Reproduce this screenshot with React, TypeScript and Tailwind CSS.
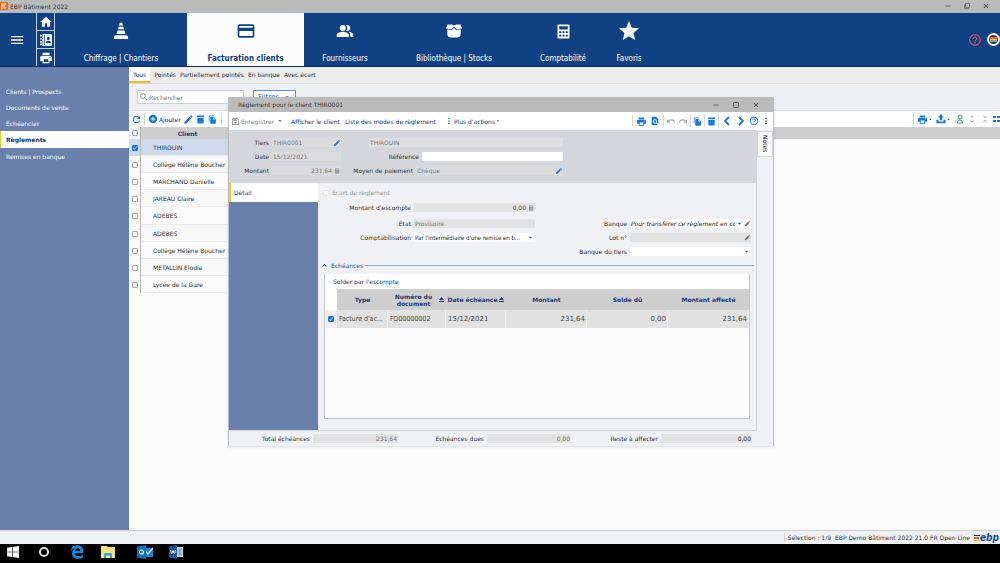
import type { ReactNode } from "react";
import clsx from "clsx";
import {
  MdAddCircle,
  MdArrowDropDown,
  MdCheck,
  MdClose,
  MdCreditCard,
  MdCropSquare,
  MdEdit,
  MdFileCopy,
  MdFilterNone,
  MdFindInPage,
  MdHelpOutline,
  MdHome,
  MdKeyboardArrowUp,
  MdMenu,
  MdMoreVert,
  MdOutlineSave,
  MdPeopleAlt,
  MdPrint,
  MdRedo,
  MdRefresh,
  MdRemove,
  MdSearch,
  MdStar,
  MdUndo,
  MdUnfoldLess,
  MdUnfoldMore,
} from "react-icons/md";

const clients = [
  "THIROUIN",
  "Collège Hélène Boucher",
  "MARCHAND Danielle",
  "JAREAU Claire",
  "ADEBES",
  "ADEBES",
  "Collège Hélène Boucher",
  "METALLIN Elodie",
  "Lycée de la Gare",
];

const sideLinks = ["Clients | Prospects", "Documents de vente", "Échéancier", "Règlements", "Remises en banque"];

const views = ["Tous", "Pointés", "Partiellement pointés", "En banque", "Avec écart"];

function Cone() {
  return (
    <svg viewBox="0 0 24 24" className="h-5 w-5" fill="currentColor">
      <path d="M10.500 2h3l.9 3.500H9.600zM9.200 7h5.600l.9 3H8.300zM7.800 11.500h8.400l1 4H6.800zM3.500 20.500c0-2 .8-3.500 2.300-3.500h12.400c1.500 0 2.300 1.500 2.300 3.500v1h-17z" />
    </svg>
  );
}

function OpenBox() {
  return (
    <svg viewBox="0 0 16 14" className="h-[14px] w-4" fill="currentColor">
      <path d="M1.500.500h4L8 1.500l2.500-1h4L16 4.200l-5 1.300-2-1.700L8 2.800 7 3.800 5 5.500 0 4.200z" />
      <path d="M1.300 5.200l4.200 1L8 4l2.500 2.200 4.200-1V10c0 2.700-1.700 3.500-4 3.500H5.300c-2.300 0-4-.8-4-3.500z" />
    </svg>
  );
}

function AddressBook() {
  return (
    <svg viewBox="0 0 12 12" className="h-3 w-3" fill="currentColor" fillRule="evenodd">
      <path d="M0 1h2v1.500H0zM0 4h2v1.500H0zM0 7h2v1.500H0zM0 9.500h2V11H0z" />
      <path d="M2.500 0H11a1 1 0 011 1v10a1 1 0 01-1 1H2.500zM4 1v10h.8V1zM8.300 3a1.500 1.500 0 100 3 1.500 1.500 0 000-3zM5.700 9h5.200c0-1.500-1.200-2.200-2.600-2.200S5.700 7.500 5.700 9z" />
    </svg>
  );
}

function Calculator({ className }: { className?: string }) {
  return (
    <svg viewBox="0 0 24 24" className={className} fill="currentColor" fillRule="evenodd">
      <path d="M5 2h14a1.500 1.500 0 011.500 1.500v17A1.500 1.500 0 0119 22H5a1.500 1.500 0 01-1.500-1.500v-17A1.500 1.500 0 015 2zM6 4.500V9h12V4.500zM6 11.500V14h3v-2.500zM10.500 11.500V14h3v-2.500zM15 11.500V14h3v-2.500zM6 16.500V19h3v-2.500zM10.500 16.500V19h3v-2.500zM15 16.500V19h3v-2.500z" />
    </svg>
  );
}

function Bin() {
  return (
    <svg viewBox="0 0 10 10" className="h-[9px] w-[9px]" fill="currentColor">
      <path d="M1 .5h8v2H1zM1.500 3.300h7v5.200a1 1 0 01-1 1h-5a1 1 0 01-1-1z" />
    </svg>
  );
}

function Upload() {
  return (
    <svg viewBox="0 0 24 24" className="h-[10px] w-[10px]" fill="currentColor">
      <path d="M12 0l7 8h-4v7H9V8H5zM1 14h5v4h12v-4h5v8H1z" />
    </svg>
  );
}

function Chevron({ left }: { left?: boolean }) {
  return (
    <svg viewBox="0 0 12 12" className="h-3 w-3" fill="none" stroke="currentColor" strokeWidth="1.800">
      <path d={left ? "M8 2L4 6l4 4" : "M4 2l4 4-4 4"} />
    </svg>
  );
}

function Contact() {
  return (
    <svg viewBox="0 0 10 10" className="h-[10px] w-[10px]" fill="none">
      <path d="M1 9c0-2 1-3 3-3" stroke="#b8c4c0" />
      <circle cx="6" cy="3" r="2" stroke="#3f9f7c" />
      <path d="M3.500 9c0-2 1-3 2.500-3s2.500 1 2.500 3z" stroke="#3f9f7c" />
    </svg>
  );
}

const modules = [
  { name: "Chiffrage | Chantiers", icon: <Cone />, width: "w-[132px]" },
  { name: "Facturation clients", icon: <MdCreditCard className="h-5 w-5" />, width: "w-[117px]", active: true },
  { name: "Fournisseurs", icon: <MdPeopleAlt className="h-[18px] w-[18px]" />, width: "w-[82px]" },
  { name: "Bibliothèque | Stocks", icon: <OpenBox />, width: "w-[136px]" },
  { name: "Comptabilité", icon: <Calculator className="h-[17px] w-[17px]" />, width: "w-[82px]" },
  { name: "Favoris", icon: <MdStar className="h-6 w-6" />, width: "w-[50px]" },
];

function Tick({ label, checked, disabled }: { label: string; checked?: boolean; disabled?: boolean }) {
  return (
    <span className="relative inline-flex h-[6px] w-[6px] shrink-0">
      <input
        type="checkbox"
        aria-label={label}
        defaultChecked={checked}
        disabled={disabled}
        className="peer h-[6px] w-[6px] appearance-none rounded-[1px] border border-[#aaa] bg-white checked:border-[#1878d8] checked:bg-[#1878d8] disabled:border-[#e4e4e6]"
      />
      <MdCheck className="pointer-events-none absolute inset-0 hidden h-[6px] w-[6px] text-white peer-checked:block" />
    </span>
  );
}

function IconButton({ label, className, children }: { label: string; className?: string; children?: ReactNode }) {
  return (
    <button type="button" aria-label={label} className={clsx("flex shrink-0 items-center justify-center", className)}>
      {children}
    </button>
  );
}

function Divider() {
  return <span className="h-3 w-px shrink-0 bg-[#d4d4d4]" />;
}

type FieldProps = {
  id: string;
  label: string;
  value?: string;
  labelWidth?: string;
  className?: string;
  inputClass?: string;
  children?: ReactNode;
};

function Field({ id, label, value = "", labelWidth, className, inputClass = "bg-[#e2e2e2] text-[#777]", children }: FieldProps) {
  return (
    <div className={clsx("flex h-[9px] items-center gap-[3px]", className)}>
      <label htmlFor={id} className={clsx("shrink-0 whitespace-nowrap text-right", labelWidth)}>
        {label}
      </label>
      <div className={clsx("flex h-[9px] min-w-0 flex-1 items-center", inputClass)}>
        <input id={id} defaultValue={value} className="h-[9px] min-w-0 flex-1 bg-transparent px-px text-inherit outline-none [text-align:inherit]" />
        {children}
      </div>
    </div>
  );
}

function SelectField({ id, label, value, labelWidth, className, selectClass, children }: FieldProps & { selectClass?: string }) {
  return (
    <div className={clsx("flex h-[9px] items-center gap-[3px]", className)}>
      <label htmlFor={id} className={clsx("shrink-0 whitespace-nowrap text-right", labelWidth)}>
        {label}
      </label>
      <div className="flex h-[9px] min-w-0 flex-1 items-center bg-white">
        <select id={id} className={clsx("h-[9px] min-w-0 flex-1 appearance-none overflow-hidden bg-transparent pl-px text-[#222] outline-none", selectClass)}>
          <option>{value}</option>
        </select>
        <MdArrowDropDown className="h-[9px] w-[9px] shrink-0 text-[#1878d8]" />
        {children}
      </div>
    </div>
  );
}

function WindowButtons({ restore, className }: { restore?: boolean; className?: string }) {
  return (
    <div className={clsx("flex items-center text-[#333]", className)}>
      <IconButton label="Réduire">
        <MdRemove className="h-2 w-2" />
      </IconButton>
      <IconButton label="Agrandir">
        {restore ? <MdFilterNone className="h-[6px] w-2" /> : <MdCropSquare className="h-2 w-2" />}
      </IconButton>
      <IconButton label="Fermer">
        <MdClose className="h-2 w-2" />
      </IconButton>
    </div>
  );
}

function TopNav() {
  return (
    <header className="flex h-[54px] shrink-0 overflow-hidden border-b border-[#0a2a5c] bg-[#104283] text-white">
      <IconButton label="Menu" className="w-[34px]">
        <MdMenu className="h-4 w-4" />
      </IconButton>
      <div className="ml-[2px] flex w-[19px] shrink-0 flex-col divide-y divide-[#c5d2e6] border-x border-[#c5d2e6]">
        <IconButton label="Accueil" className="flex-1">
          <MdHome className="h-[14px] w-[14px]" />
        </IconButton>
        <IconButton label="Contacts" className="flex-1">
          <AddressBook />
        </IconButton>
        <IconButton label="Imprimer" className="flex-1">
          <MdPrint className="h-[14px] w-[14px]" />
        </IconButton>
      </div>
      <nav className="flex min-w-0 flex-1 font-['DejaVu_Sans_Condensed',sans-serif]">
        {modules.map((m) => (
          <button
            key={m.name}
            type="button"
            className={clsx(
              "flex shrink-0 flex-col items-center justify-between whitespace-nowrap pt-[6px] pb-[2px] text-[8px]",
              m.width,
              m.active && "bg-[#fcfcfd] font-bold text-[#104283]"
            )}
          >
            <span className="flex h-6 items-center">{m.icon}</span>
            <span className="leading-[10px]">{m.name}</span>
          </button>
        ))}
      </nav>
      <div className="flex w-8 shrink-0 items-center gap-[5px]">
        <IconButton label="Aide" className="text-[#e0506c]">
          <MdHelpOutline className="h-[14px] w-[14px]" />
        </IconButton>
        <IconButton label="EBP" className="h-[13px] w-[13px] rounded-full border-2 border-white bg-[#2a3560]">
          <svg viewBox="0 0 9 9" className="h-[9px] w-[9px]">
            <path d="M1 2h7v2H1z" fill="#e66b2e" />
            <path d="M1 4h7v1H1z" fill="#e9c84a" />
            <path d="M1 5h7v2H1z" fill="#7fa0a4" />
          </svg>
        </IconButton>
      </div>
    </header>
  );
}

function Sidebar() {
  return (
    <aside className="w-[129px] shrink-0 bg-[#6880ab] pt-4">
      <ul>
        {sideLinks.map((name) => (
          <li key={name}>
            <a
              href="#"
              className={clsx(
                "flex items-center",
                name === "Règlements"
                  ? "h-[17px] border-l border-[#f2c230] bg-[#fcfcfd] pl-[5px] font-bold text-[#163a78]"
                  : "h-4 pl-[6px] text-white"
              )}
            >
              {name}
            </a>
          </li>
        ))}
      </ul>
    </aside>
  );
}

function ClientTable() {
  return (
    <table className="w-full table-fixed border-separate border-spacing-0 text-left">
      <colgroup>
        <col className="w-3" />
        <col className="w-[87px]" />
        <col />
      </colgroup>
      <thead>
        <tr className="h-3 bg-[#cfcfcf] text-[#163a78]">
          <th className="border-r border-[#b5b5b5] bg-[#f3f3f3] p-0">
            <div className="flex justify-center">
              <Tick label="Tout sélectionner" />
            </div>
          </th>
          <th className="p-0 pl-[6px] text-center">Client</th>
          <th className="p-0" />
        </tr>
      </thead>
      <tbody>
        {clients.map((name, i) => (
          <tr key={i} className={clsx(i === 4 ? "h-[18px]" : "h-[17px]", i === 0 && "text-[#163a78]")}>
            <td className={clsx("border-r border-[#b5b5b5] p-0", i === 0 && "bg-[#cfdbec]")}>
              <div className="flex justify-center">
                <Tick label={`Sélectionner ${name}`} checked={i === 0} />
              </div>
            </td>
            <td
              className={clsx(
                "whitespace-nowrap border-b border-[#ececec] p-0 pl-3",
                i === 0 ? "bg-[#cfdbec]" : i % 2 ? "bg-[#f8f8f8]" : "bg-[#fcfcfd]"
              )}
            >
              {name}
            </td>
            <td className="p-0" />
          </tr>
        ))}
      </tbody>
    </table>
  );
}

function ListPanel() {
  return (
    <main className="min-w-0 flex-1 bg-[#fcfcfd]">
      <div role="tablist" className="flex h-[17px] gap-[4px] border-b border-[#d8d8d8] bg-[#ececec]">
        {views.map((v, i) => (
          <button
            key={v}
            type="button"
            role="tab"
            aria-selected={i === 0}
            className={clsx("border-b-2", i === 0 ? "border-[#f2b820] bg-white px-1 text-[#104283]" : "border-transparent")}
          >
            {v}
          </button>
        ))}
      </div>
      <div className="flex h-[27px] gap-[9px] border-b border-[#e0e0e4] bg-[#eff0f4] pt-[6px] pl-2">
        <div className="flex h-[14px] w-[107px] items-center border border-[#d0d0d4] bg-white pl-px text-[#888]">
          <MdSearch className="h-[10px] w-[10px]" />
          <input aria-label="Rechercher" placeholder="Rechercher" className="min-w-0 flex-1 bg-transparent outline-none placeholder:text-[#777]" />
        </div>
        <button type="button" className="flex h-[14px] w-[43px] items-center justify-center gap-1 border border-[#5b8fd0] bg-white text-[7px] text-[#1878d8]">
          Filtres
          <MdArrowDropDown className="h-2 w-2" />
        </button>
      </div>
      <div className="flex h-4 items-center bg-white text-[#1878d8]">
        <IconButton label="Actualiser" className="w-[15px]">
          <MdRefresh className="h-[11px] w-[11px]" />
        </IconButton>
        <Divider />
        <button type="button" className="ml-[3px] flex items-center gap-px text-[#163a78]">
          <MdAddCircle className="h-[10px] w-[10px] text-[#1878d8]" />
          Ajouter
        </button>
        <IconButton label="Modifier" className="ml-[2px]">
          <MdEdit className="h-[11px] w-[11px]" />
        </IconButton>
        <IconButton label="Supprimer" className="ml-[2px]">
          <Bin />
        </IconButton>
        <IconButton label="Dupliquer" className="mr-1 ml-[3px]">
          <MdFileCopy className="h-[9px] w-[9px]" />
        </IconButton>
        <Divider />
        <div className="ml-auto flex items-center gap-[3px] text-[#aaa]">
          <Divider />
          <IconButton label="Imprimer la liste" className="text-[#1878d8]">
            <MdPrint className="h-[11px] w-[11px]" />
            <MdArrowDropDown className="h-[5px] w-[5px] text-[#333]" />
          </IconButton>
          <IconButton label="Exporter" className="text-[#1878d8]">
            <Upload />
            <MdArrowDropDown className="h-[5px] w-[5px] text-[#333]" />
          </IconButton>
          <IconButton label="Client">
            <Contact />
          </IconButton>
          <IconButton label="Déplier">
            <MdUnfoldMore className="h-[10px] w-[10px]" />
          </IconButton>
          <IconButton label="Replier">
            <MdUnfoldLess className="h-[10px] w-[10px]" />
          </IconButton>
          <IconButton label="Affichage" className="w-[7px] overflow-hidden text-[#1878d8]">
            <svg viewBox="0 0 7 6" className="h-[6px] w-[7px]" fill="currentColor">
              <path d="M0 0h3v2H0zM4 0h3v2H4zM0 4h3v2H0zM4 4h3v2H4z" />
            </svg>
          </IconButton>
        </div>
      </div>
      <ClientTable />
    </main>
  );
}

function DialogToolbar() {
  return (
    <div className="flex h-[18px] items-center whitespace-nowrap bg-white pl-[2px] text-[#163a78]">
      <button type="button" className="flex items-center gap-px text-[#888]">
        <MdOutlineSave className="h-[9px] w-[9px]" />
        Enregistrer
        <MdArrowDropDown className="ml-px h-2 w-2 text-[#555]" />
      </button>
      <button type="button" className="ml-[7px]">Afficher le client</button>
      <button type="button" className="ml-[5px]">Liste des modes de règlement</button>
      <button type="button" className="ml-2 flex items-center">
        <MdMoreVert className="h-[10px] w-[10px] text-[#1878d8]" />
        Plus d'actions
        <MdArrowDropDown className="h-[6px] w-[6px]" />
      </button>
      <div className="mr-[2px] ml-auto flex items-center gap-[2px] text-[#1878d8]">
        <Divider />
        <IconButton label="Imprimer" className="w-3">
          <MdPrint className="h-[11px] w-[11px]" />
        </IconButton>
        <IconButton label="Aperçu" className="w-3">
          <MdFindInPage className="h-[10px] w-[10px]" />
        </IconButton>
        <Divider />
        <IconButton label="Annuler" className="text-[#aaa]">
          <MdUndo className="h-[10px] w-[10px]" />
        </IconButton>
        <IconButton label="Rétablir" className="text-[#aaa]">
          <MdRedo className="h-[10px] w-[10px]" />
        </IconButton>
        <Divider />
        <IconButton label="Dupliquer">
          <MdFileCopy className="h-[9px] w-[9px]" />
        </IconButton>
        <Divider />
        <IconButton label="Supprimer">
          <Bin />
        </IconButton>
        <Divider />
        <IconButton label="Précédent">
          <Chevron left />
        </IconButton>
        <IconButton label="Suivant">
          <Chevron />
        </IconButton>
        <IconButton label="Aide">
          <MdHelpOutline className="h-[10px] w-[10px]" />
        </IconButton>
        <IconButton label="Plus" className="text-[#333]">
          <MdMoreVert className="h-[10px] w-[10px]" />
        </IconButton>
      </div>
    </div>
  );
}

function DialogHeader() {
  return (
    <div className="flex bg-[#eff1f5]">
      <div className="flex flex-1 gap-3 bg-[#d5d6db] pt-2 pb-2">
        <div className="flex flex-col gap-[5px]">
          <Field id="tiers" label="Tiers" value="THIR0001" labelWidth="w-10" className="w-[112px]" inputClass="bg-[#dcdcdf] text-[#777]">
            <MdEdit className="h-2 w-2 text-[#1878d8]" />
          </Field>
          <Field id="date" label="Date" value="15/12/2021" labelWidth="w-10" className="w-[112px]" inputClass="bg-[#dcdcdf] text-[#777]" />
          <Field id="montant" label="Montant" value="231,64" labelWidth="w-10" className="w-[112px]" inputClass="bg-[#dcdcdf] text-right text-[#777]">
            <Calculator className="mx-px h-[6px] w-[6px] text-[#888]" />
          </Field>
        </div>
        <div className="flex w-[210px] flex-col gap-[5px]">
          <div className="flex h-[9px] justify-end">
            <input aria-label="Nom du tiers" defaultValue="THIROUIN" className="h-[9px] w-[194px] bg-[#dfdfe1] px-px text-[#777] outline-none" />
          </div>
          <Field id="reference" label="Référence" labelWidth="w-[66px]" inputClass="bg-white" />
          <Field id="moyen" label="Moyen de paiement" value="Chèque" labelWidth="w-[60px]" inputClass="bg-[#dcdcdf] text-[#777]">
            <MdEdit className="h-2 w-2 text-[#1878d8]" />
          </Field>
        </div>
      </div>
      <div className="w-4 pt-px">
        <button type="button" className="flex h-[26px] w-4 items-center justify-center border border-[#d4d4d8] bg-[#f8f8fa] [writing-mode:vertical-rl]">
          Notes
        </button>
      </div>
    </div>
  );
}

function Sort() {
  return (
    <svg viewBox="0 0 5 5" className="h-[5px] w-[5px] shrink-0" fill="currentColor">
      <path d="M2.500 0L5 3H0zM0 4h5v1H0z" />
    </svg>
  );
}

function DueTable() {
  return (
    <div className="flex h-[145px] flex-col border border-t-0 border-[#c8c8cc] bg-[#fcfcfd]">
      <div className="h-[15px] shrink-0 bg-white pl-2 text-[#163a78]">
        <button type="button" className="h-[15px]">Solder par l'escompte</button>
      </div>
      <table className="w-full table-fixed border-separate border-spacing-0">
        <colgroup>
          <col className="w-3" />
          <col className="w-[51px]" />
          <col className="w-[58px]" />
          <col className="w-[60px]" />
          <col />
          <col />
          <col />
        </colgroup>
        <thead>
          <tr className="h-[21px] bg-[#cfcfcf] text-[#163a78] [&>th]:p-0 [&>th]:leading-[7px]">
            <th className="bg-white" />
            <th>Type</th>
            <th>
              <div className="flex items-center justify-between pr-[2px]">
                <span className="flex-1">Numéro du document</span>
                <Sort />
              </div>
            </th>
            <th>
              <div className="flex items-center justify-center gap-[2px] whitespace-nowrap">
                Date échéance
                <Sort />
              </div>
            </th>
            <th>Montant</th>
            <th>Solde dû</th>
            <th>Montant affecté</th>
          </tr>
        </thead>
        <tbody>
          <tr className="h-[18px] bg-[#e2e2e2] text-[7px] text-[#444] [&>td]:border-r [&>td]:border-[#f0f0f0] [&>td]:p-0 [&>td]:pr-px [&>td]:pl-[2px]">
            <td className="bg-[#eff1f5]">
              <div className="flex justify-center">
                <Tick label="Sélectionner l'échéance" checked />
              </div>
            </td>
            <td className="whitespace-nowrap font-['DejaVu_Sans_Condensed',sans-serif]">Facture d'ac...</td>
            <td className="whitespace-nowrap font-['DejaVu_Sans_Condensed',sans-serif] text-[#5a3c28]">FD00000002</td>
            <td>15/12/2021</td>
            <td className="text-right">231,64</td>
            <td className="text-right">0,00</td>
            <td className="text-right">231,64</td>
          </tr>
        </tbody>
      </table>
    </div>
  );
}

function PaymentDialog() {
  return (
    <section
      role="dialog"
      aria-label="Règlement pour le client THIR0001"
      className="absolute top-[97px] left-[228px] w-[546px] border-x border-[#c0c0c4] bg-[#eff1f5] shadow"
    >
      <div className="flex h-[15px] items-center justify-between bg-[#bbb] pr-[13px] pl-[9px]">
        <h1>Règlement pour le client THIR0001</h1>
        <WindowButtons className="gap-3" />
      </div>
      <DialogToolbar />
      <DialogHeader />
      <div className="mr-4 flex border-r border-b border-[#d4d4d8]">
        <div className="w-[89px] shrink-0 bg-[#6880ab]">
          <button type="button" className="flex h-[19px] w-full items-center border-l-2 border-[#f2c230] bg-white pl-[3px] text-[#163a78]">
            Détail
          </button>
        </div>
        <div className="min-w-0 flex-1 pt-[5px] pb-[11px]">
          <label className="flex h-[9px] items-center gap-[3px] pl-[5px] text-[#999]">
            <Tick label="Écart de règlement" disabled />
            Écart de règlement
          </label>
          <Field id="escompte" label="Montant d'escompte" value="0,00" labelWidth="w-[93px]" className="mt-[6px] w-[217px]" inputClass="bg-[#e2e2e2] text-right text-[#555]">
            <Calculator className="mx-px h-[6px] w-[6px] text-[#888]" />
          </Field>
          <div className="mt-[7px] flex justify-between pr-[5px]">
            <div className="flex flex-col gap-[5px]">
              <Field id="etat" label="État" value="Provisoire" labelWidth="w-[93px]" className="w-[217px]" />
              <SelectField
                id="compta"
                label="Comptabilisation"
                value="Par l'intermédiaire d'une remise en b..."
                labelWidth="w-[93px]"
                className="w-[217px]"
                selectClass="font-['DejaVu_Sans_Condensed',sans-serif]"
              />
            </div>
            <div className="flex flex-col gap-[5px]">
              <SelectField
                id="banque"
                label="Banque"
                value="Pour transférer ce règlement en compta"
                labelWidth="w-12"
                className="w-[172px]"
                selectClass="italic"
              >
                <MdEdit className="h-[7px] w-[7px] shrink-0 text-[#666]" />
              </SelectField>
              <Field id="lot" label="Lot n°" labelWidth="w-12" className="w-[172px]">
                <MdEdit className="h-[7px] w-[7px] text-[#666]" />
              </Field>
              <SelectField id="banque-tiers" label="Banque du tiers" value="" labelWidth="w-12" className="w-[172px]" />
            </div>
          </div>
          <button type="button" className="mt-[5px] flex h-[9px] w-full items-center gap-[2px] px-[2px] text-[#2c5a9c]">
            <MdKeyboardArrowUp className="h-[9px] w-[9px] text-[#222]" />
            Échéances
            <span className="h-px flex-1 bg-[#8ea6c8]" />
          </button>
          <div className="mt-1 pr-[6px] pl-[6px]">
            <DueTable />
          </div>
        </div>
      </div>
      <div className="flex h-[15px] items-center">
        <Field id="total" label="Total échéances" value="231,64" labelWidth="w-[81px]" className="w-[169px]" inputClass="bg-[#e2e2e2] text-right text-[#777]" />
        <Field id="dues" label="Échéances dues" value="0,00" labelWidth="w-[86px]" className="w-[173px]" inputClass="bg-[#e2e2e2] text-right text-[#777]" />
        <Field id="reste" label="Reste à affecter" value="0,00" labelWidth="w-[87px]" className="w-[181px]" inputClass="bg-[#e2e2e2] text-right text-[#222]" />
      </div>
    </section>
  );
}

function StatusBar() {
  return (
    <footer className="flex h-[14px] shrink-0 items-center justify-end gap-1 border-t border-[#d0d0d0] bg-[#f0f1f3] pr-px">
      <span className="border-l border-[#d8d8d8] pl-[3px]">Sélection : 1/9</span>
      <span>EBP Demo Bâtiment 2022 21.0 FR Open Line</span>
      <span className="flex items-center font-['DejaVu_Sans_Condensed',sans-serif]">
        <svg viewBox="0 0 6 6" className="h-[6px] w-[6px]">
          <path d="M0 0h6v1H0z" fill="#104283" />
          <path d="M0 2h5v2H0z" fill="#ea6a20" />
          <path d="M0 5h6v1H0z" fill="#f2b820" />
        </svg>
        <b className="text-[10px] leading-[10px] text-[#104aa0] italic">ebp</b>
      </span>
    </footer>
  );
}

function Taskbar() {
  return (
    <div className="flex h-[19px] shrink-0 items-center bg-black pb-[3px] pl-[7px]">
      <IconButton label="Démarrer" className="w-3">
        <svg viewBox="0 0 12 12" className="h-3 w-3" fill="#fff">
          <path d="M0 1.700l5-.7v4.700H0zM5.600.9L12 0v5.700H5.600zM0 6.300h5V11l-5-.7zM5.600 6.300H12V12l-6.400-.9z" />
        </svg>
      </IconButton>
      <IconButton label="Cortana" className="ml-5 h-[10px] w-[10px] rounded-full border-2 border-[#ddd]" />
      <IconButton label="Edge" className="ml-[21px]">
        <svg viewBox="0 0 24 24" className="h-[14px] w-[14px]" fill="#1c82dc">
          <path d="M1 11C2 4 6.500.500 12.500.500 19 .500 23 5 23 11v3H8.500c.2 3.500 3 5 6.500 5 2.500 0 5-.7 7-1.800V22c-2.300 1.200-5 1.800-8 1.800C7.500 23.800 3.500 20 3.500 14.500c0-4 2-7 5.500-8.700-3.500.2-6 2-8 5.200zM8.700 9.800h8.500c0-2.800-1.500-4.300-4.100-4.300-2.400 0-4 1.700-4.400 4.300z" />
        </svg>
      </IconButton>
      <IconButton label="Explorateur" className="ml-[17px]">
        <svg viewBox="0 0 14 12" className="h-3 w-[14px]">
          <path d="M0 0h6l1 1h7v11H0z" fill="#f7e27e" />
          <path d="M3 12V8.500C3 7.600 3.600 7 4.500 7h5c.9 0 1.500.6 1.500 1.500V12H9V9.500H5V12z" fill="#38a5dc" />
        </svg>
      </IconButton>
      <IconButton label="Outlook" className="ml-[22px]">
        <svg viewBox="0 0 16 14" className="h-[14px] w-4">
          <path d="M7 3h9v9H7z" fill="#1a7fd0" />
          <path d="M8 6l3 3 5-6" fill="none" stroke="#d6ecfc" strokeWidth="1.300" />
          <path d="M0 1.500L9 0v14L0 12.500z" fill="#0f6fc0" />
          <circle cx="4.500" cy="7" r="2" fill="none" stroke="#fff" strokeWidth="1.200" />
        </svg>
      </IconButton>
      <IconButton label="Word" className="ml-4">
        <svg viewBox="0 0 14 14" className="h-[14px] w-[14px]">
          <path d="M7 2h7v10H7z" fill="#dce8f8" />
          <path d="M9 4h4M9 6h4M9 8h4M9 10h4" stroke="#2b579a" strokeWidth=".8" />
          <path d="M0 1.500L8 0v14l-8-1.500z" fill="#1f4f98" />
          <path d="M1.500 5l1 4L4 5.500 5.500 9l1-4" fill="none" stroke="#fff" strokeWidth=".9" />
        </svg>
      </IconButton>
    </div>
  );
}

export default function App() {
  return (
    <div className="relative flex min-h-screen flex-col overflow-hidden bg-[#fcfcfd] font-['DejaVu_Sans','Noto_Sans',sans-serif] text-[6px] leading-[9px] text-[#333]">
      <div className="flex h-[13px] shrink-0 items-center border-b border-[#a9bdd8] bg-[#bbb]">
        <span className="flex h-2 w-2 items-center justify-center bg-[#ee6a1c]">
          <svg viewBox="0 0 6 6" className="h-[6px] w-[6px]">
            <path d="M0 1h5M0 3h4M0 5h5" stroke="#fff" />
          </svg>
        </span>
        <span className="ml-[2px]">EBP Bâtiment 2022</span>
        <WindowButtons restore className="mr-[10px] ml-auto gap-[11px]" />
      </div>
      <TopNav />
      <div className="flex flex-1">
        <Sidebar />
        <ListPanel />
      </div>
      <StatusBar />
      <Taskbar />
      <PaymentDialog />
    </div>
  );
}
